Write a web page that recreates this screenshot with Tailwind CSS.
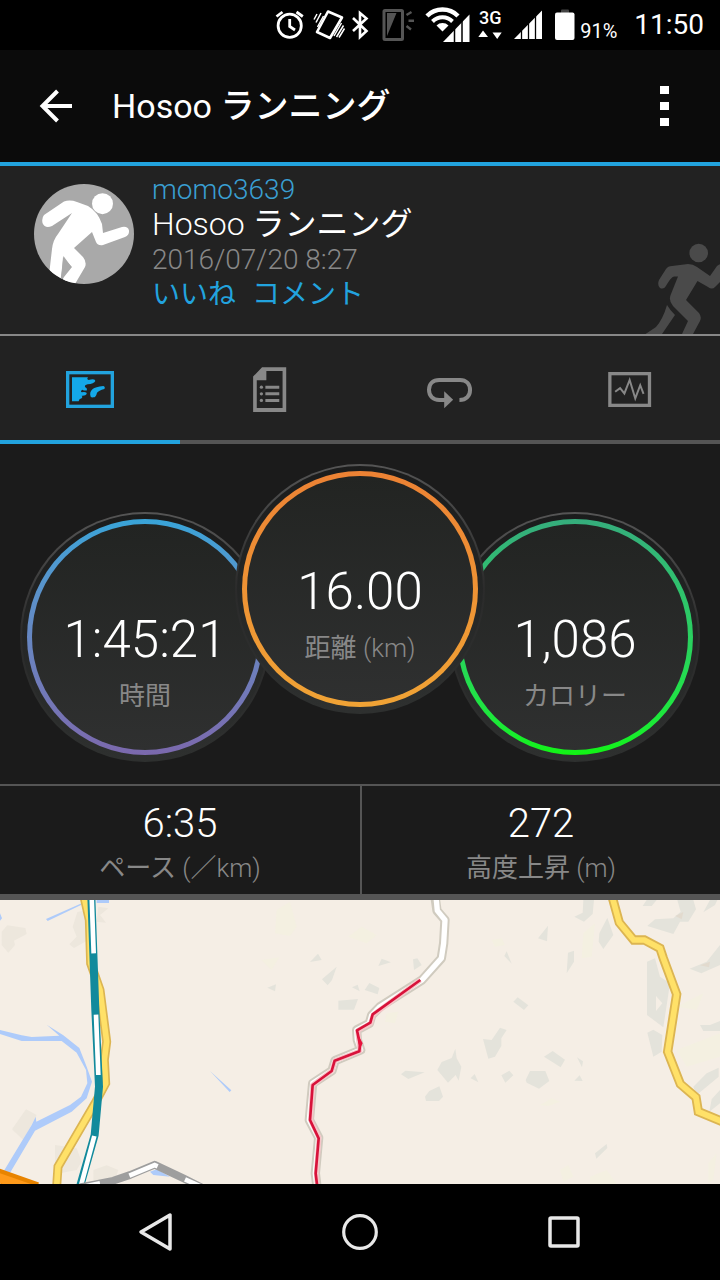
<!DOCTYPE html>
<html lang="ja">

<head>
    <meta charset="UTF-8">
    <meta name="viewport" content="width=device-width, initial-scale=1.0">
    <script src="https://cdn.jsdelivr.net/npm/@tailwindcss/browser@4"></script>
    <title>Hosoo ランニング</title>
</head>

<body class="flex min-h-screen flex-col bg-[#1b1b1b] font-['Roboto','Noto_Sans_CJK_JP',sans-serif] text-white">

    <!-- status bar -->
    <div class="flex h-[50px] items-center justify-end bg-black pr-4">
        <svg class="h-[50px] w-9" viewBox="270 0 36 50" fill="none" stroke="#fff" stroke-width="2.8">
            <circle cx="287.7" cy="25.7" r="11.6" />
            <path d="M274.5 16.5L280.5 12M294.5 12L300.8 16.5M287.7 19V26.5L293 30" />
        </svg>
        <svg class="h-[50px] w-10" viewBox="306 0 40 50" fill="none" stroke="#fff" stroke-width="2">
            <path d="M326 11.5L340 17.5L328 38L315 32Z" stroke-width="2.6" stroke-linejoin="round" />
            <path d="M312 19.5L315 14M314 22.5L319 13M315.5 27L321.5 16M334.5 37L341.5 25.5M337 37.5L342.5 28.5M332 36L339.5 23" stroke-width="1.5" />
        </svg>
        <svg class="h-[50px] w-7" viewBox="346 0 28 50" fill="none" stroke="#fff" stroke-width="2.6">
            <path d="M351 18L364.5 31L358 37V13L364.5 18.5L351 31" />
        </svg>
        <svg class="h-[50px] w-11" viewBox="374 0 44 50" fill="none" stroke="#555" stroke-width="3">
            <rect x="382" y="10.5" width="18.5" height="29" rx="1" />
            <path d="M385 13H394.5L385 36Z" fill="#555" stroke="none" />
            <path d="M404.5 15L409.5 12M406.5 20.7H412M404.5 26L409 29.5" stroke-width="2.4" />
        </svg>
        <svg class="h-[50px] w-[54px]" viewBox="418 0 54 50" fill="none" stroke="#fff">
            <path d="M425 16A22 22 0 0 1 456 16" stroke-width="4.5" />
            <path d="M430.5 21.5A14 14 0 0 1 450.5 21.5" stroke-width="4" />
            <path d="M434.5 25.5A8.5 8.5 0 0 1 446.5 25.5L440.5 31.5Z" fill="#fff" stroke="none" />
            <path d="M441 42L467.5 14.5V42Z" fill="#fff" stroke="#000" stroke-width="3" paint-order="stroke" />
            <path d="M452.5 20V43M460 15V43" stroke="#000" stroke-width="1.5" />
        </svg>
        <div class="flex h-[50px] w-8 flex-col items-center pt-2">
            <span class="text-lg leading-5 font-medium">3G</span>
            <svg class="h-3 w-8" viewBox="472 28 32 12" fill="#fff">
                <path d="M476.3 37L481 30.5L486 37ZM490.5 32.5H499.7L495.2 39Z" />
            </svg>
        </div>
        <svg class="h-[50px] w-10" viewBox="504 0 40 50">
            <path d="M512 39L540 10.5V39Z" fill="#fff" />
            <path d="M519.5 20V40M526.5 15V40M533.5 10V40" stroke="#000" stroke-width="1.3" />
        </svg>
        <svg class="h-[50px] w-[34px]" viewBox="544 0 34 50">
            <rect x="559" y="9.5" width="8" height="5" rx="1" fill="#444" />
            <rect x="553" y="12.5" width="19.5" height="27.5" rx="2" fill="#fff" />
        </svg>
        <span class="w-[54px] pt-3 text-xl leading-6">91%</span>
        <span class="text-[28px] leading-[50px]">11:50</span>
    </div>

    <!-- title bar -->
    <header class="flex h-[116px] items-center border-b-4 border-[#22a3de] bg-[#0b0b0b]">
        <button type="button" aria-label="戻る" class="px-8">
            <svg class="size-12" viewBox="32 82 48 48" fill="none" stroke="#fff" stroke-width="4">
                <path d="M72 106H42M57.5 91L42.5 106L57.5 121" />
            </svg>
        </button>
        <h1 class="flex-1 text-[34px] leading-10">Hosoo <span class="font-medium">ランニング</span></h1>
        <button type="button" aria-label="メニュー" class="mr-8 flex h-12 w-12 flex-col items-center justify-center gap-2">
            <span class="h-2 w-[9px] bg-white"></span>
            <span class="h-2 w-[9px] bg-white"></span>
            <span class="h-2 w-[9px] bg-white"></span>
        </button>
    </header>

    <!-- activity owner -->
    <section class="relative flex gap-[18px] border-b-2 border-[#888] bg-[#222] px-[34px] pt-1.5 pb-[22px]">
        <svg class="mt-3 size-[100px] rounded-full bg-[#a9a9a9]" viewBox="34 184 100 100" fill="#fff">
            <circle cx="102.5" cy="203.7" r="10.5" />
            <path d="M44 215L64 201.500Q70 199.500 77 202L88 206Q98 212 102 224L103 233L122 227Q128 226 129 230.500Q129.500 235 125 237L103 245Q98 246 96 242L92 232L74 248L83 257Q87 262 85 267L75 284H60L64 277L72 267L63 257L61 284H48L52 249Q53 240 58 234L72 213L52 226Q45 229 42.500 223Q41.500 218 44 215Z" />
            <path d="M63.5 256L71 266.5L63 277L60.5 280Z" fill="#a9a9a9" />
        </svg>
        <div class="text-[28px] leading-[35px]">
            <a href="#" class="block font-light text-[#3a9fd2]">momo3639</a>
            <p class="text-[32px] leading-[35px] font-light">Hosoo <span class="font-normal">ランニング</span></p>
            <p class="font-light text-[#888]">2016/07/20 8:27</p>
            <div class="flex gap-4 text-[#22a3de]">
                <a href="#">いいね</a>
                <a href="#">コメント</a>
            </div>
        </div>
        <svg class="absolute right-0 bottom-0 h-[94px] w-20" viewBox="640 240 80 94" fill="#4a4a4a">
            <circle cx="698.7" cy="253" r="9.3" />
            <path d="M659 280L666 269Q668 266 672 266L688 264Q693 264 697 267L710 276L717 266Q719 264 722 264V280L715 287Q712 290 708 287L697.5 281L686 300L699 313Q702 317 700 321L693 334H682L688 321L673 306Q668 300 671 294L678 276.5H674Q671 277 666.5 285Q664 290 660 288Q657 285 659 280Z" />
            <path d="M667 305Q670 310 675 315L662 334H645.5L656 327Q663 319 667 305Z" />
        </svg>
    </section>

    <nav class="grid grid-cols-4 bg-[#222]">
        <a href="#" aria-label="地図" class="flex h-[108px] items-center justify-center border-b-4 border-[#22a3de] pt-0.5">
            <svg class="h-[37px] w-12" viewBox="198 107 144 111" fill="#14a8e8">
                <rect x="203" y="112" width="134" height="101" fill="none" stroke="#22a3de" stroke-width="10" />
                <path d="M216 126H264Q259 132 266 134Q286 129 286 137Q282 146 263 147Q253 149 255 155Q262 158 261 165Q254 167 247 163Q240 167 245 171Q261 168 260 176Q257 182 245 181Q251 187 239 191L236 198H216Z" />
                <path d="M272 184Q267 171 278 161Q286 155 310 152Q317 155 313 161Q296 166 291 172Q288 186 280 186Q274 187 272 184Z" />
            </svg>
        </a>
        <a href="#" aria-label="詳細" class="flex h-[108px] items-center justify-center border-b-4 border-[#555] pt-0.5">
            <svg class="h-[45px] w-[34px]" viewBox="758 95 102 136" fill="#888">
                <path fill-rule="evenodd" d="M785 96H858V231H758V124ZM798 107V135H769V219H847V107Z" />
                <path d="M795 156H837M795 176H837M795 196H837" stroke="#888" stroke-width="9" />
                <circle cx="783" cy="156" r="5" />
                <circle cx="783" cy="176" r="5" />
                <circle cx="783" cy="196" r="5" />
            </svg>
        </a>
        <a href="#" aria-label="ラップ" class="flex h-[108px] items-center justify-center border-b-4 border-[#555] pt-0.5">
            <svg class="h-[39px] w-12" viewBox="197 105 145 116" fill="none" stroke="#888" stroke-width="12">
                <path d="M298 195C319 195 330 181 330 165C330 146 318 134 300 134H237C218 134 206 146 206 164C206 182 218 195 237 195H255" />
                <path d="M252 168L279 194L252 220Z" fill="#888" stroke="none" />
            </svg>
        </a>
        <a href="#" aria-label="グラフ" class="flex h-[108px] items-center justify-center border-b-4 border-[#555] pt-0.5">
            <svg class="h-[35px] w-11" viewBox="743 110 132 106" fill="none" stroke="#888">
                <rect x="748" y="115" width="120" height="96" stroke-width="10" />
                <path d="M764 170L779 159L792 175L808 134L825 190L840 150L850 176" stroke-width="6" />
            </svg>
        </a>
    </nav>

    <!-- gauges -->
    <section class="flex justify-center pt-5 pb-[22px] text-center font-light">
        <div class="mt-12 -mr-[35px] size-[250px] shrink-0 rounded-full bg-linear-to-b from-[#555] via-[#2b2b2b] to-[#2e302f] p-0.5">
            <div class="size-full rounded-full bg-linear-to-b from-[#1b1c1c] to-[#2e302f] p-[5px]">
                <div class="size-full rounded-full bg-linear-to-b from-[#38a4d8] to-[#7b69ad] p-[5px]">
                    <div class="size-full rounded-full bg-linear-to-b from-[#222422] to-[#2f3030] pt-[88px]">
                        <p class="text-[51px] leading-[56px]">1:45:21</p>
                        <p class="mt-3 text-[26px] leading-8 font-normal text-[#888]">時間</p>
                    </div>
                </div>
            </div>
        </div>
        <div class="z-10 size-[250px] shrink-0 rounded-full bg-linear-to-b from-[#555] via-[#2b2b2b] to-[#2e302f] p-0.5">
            <div class="size-full rounded-full bg-linear-to-b from-[#1b1c1c] to-[#2e302f] p-[5px]">
                <div class="size-full rounded-full bg-linear-to-b from-[#ec8234] to-[#f0a335] p-[5px]">
                    <div class="size-full rounded-full bg-linear-to-b from-[#222422] to-[#2f3030] pt-[88px]">
                        <p class="text-[51px] leading-[56px]">16.00</p>
                        <p class="mt-3 text-[26px] leading-8 text-[#888]"><span class="font-normal">距離</span> (km)</p>
                    </div>
                </div>
            </div>
        </div>
        <div class="mt-12 -ml-[35px] size-[250px] shrink-0 rounded-full bg-linear-to-b from-[#555] via-[#2b2b2b] to-[#2e302f] p-0.5">
            <div class="size-full rounded-full bg-linear-to-b from-[#1b1c1c] to-[#2e302f] p-[5px]">
                <div class="size-full rounded-full bg-linear-to-b from-[#35ad7c] to-[#12f312] p-[5px]">
                    <div class="size-full rounded-full bg-linear-to-b from-[#222422] to-[#2f3030] pt-[88px]">
                        <p class="text-[51px] leading-[56px]">1,086</p>
                        <p class="mt-3 text-[26px] leading-8 font-normal text-[#888]">カロリー</p>
                    </div>
                </div>
            </div>
        </div>
    </section>

    <section class="grid grid-cols-2 border-t-2 border-b-6 border-[#555] text-center font-light">
        <div class="pt-[18px] pb-2.5">
            <p class="text-[40px] leading-10">6:35</p>
            <p class="mt-2 text-[26px] leading-8 text-[#888]"><span class="font-normal">ペース</span> (／km)</p>
        </div>
        <div class="border-l-2 border-[#555] pt-[18px] pb-2.5">
            <p class="text-[40px] leading-10">272</p>
            <p class="mt-2 text-[26px] leading-8 text-[#888]"><span class="font-normal">高度上昇</span> (m)</p>
        </div>
    </section>

    <!-- route map -->
    <svg class="min-h-[284px] w-full flex-1 bg-[#f5eee5]" viewBox="0 30 2160 852" preserveAspectRatio="xMidYMid slice" fill="none">
        <!-- west: river, railway, roads -->
        <g fill="#ede7dd">
            <path d="M5 125L22 106L76 114L80 132L42 152L45 165L25 188L5 165ZM232 66L262 60L265 150L222 174L208 163L230 140L218 110ZM295 50L325 55L300 75L318 98L290 95Z" />
            <path d="M78 658L110 675L70 750L36 718ZM165 765L230 775L245 815L230 840L180 850L165 830ZM280 840L320 826L355 840L345 870H280Z" />
        </g>
        <g fill="#aecbfa">
            <path d="M138 87L245 40L243 45L143 93ZM290 30H327V39H290ZM0 70L6 85L0 92ZM0 420L65 436L95 441L178 437L140 404L190 436L238 474L260 530L276 575L260 625L215 665L105 722L28 852H6L95 705L107 680L109 695L210 645L243 620L262 580L258 540L230 488L185 453H65L0 432Z" />
            <path d="M630 543L694 601L689 606ZM450 845L470 838L510 860L460 855Z" />
        </g>
        <path d="M252 20L268 90L272 220L300 300L320 455L313 510L317 580L285 640L174 830L170 890" stroke="#dcb552" stroke-width="27" />
        <path d="M252 20L268 90L272 220L300 300L320 455L313 510L317 580L285 640L174 830L170 890" stroke="#ffe168" stroke-width="17" />
        <path d="M274 20L286 360L297 590L284 735L240 890" stroke="#128a9c" stroke-width="24" stroke-linejoin="round" />
        <path d="M275 20L281 190M288 374L295 555M283 738L242 890" stroke="#fff" stroke-width="14" />
        <path d="M240 892L340 872L390 855L464 824L550 865L620 900" stroke="#9e9e9e" stroke-width="23" stroke-linejoin="round" />
        <path d="M260 888L300 880M388 857L464 825L473 829M555 868L610 893" stroke="#fff" stroke-width="14" />
        <path d="M-10 855L110 897" stroke="#e88400" stroke-width="42" />
        <path d="M-10 861L110 903" stroke="#ff9a1a" stroke-width="28" />

        <!-- centre: recorded route -->
        <g transform="translate(720 0)">
            <path d="M110 60L150 35L170 110L150 138L105 130ZM325 140L365 110L410 135L380 160ZM65 210L118 202L95 240ZM440 370L475 365L465 400L435 395Z" fill="#f4f0e1" />
            <path d="M210 216L234 191L245 210ZM246 268L290 230L276 270L263 286ZM82 293L108 283L105 304ZM415 228L425 206L453 217ZM519 208L532 205L545 225L522 240ZM336 292L353 284L359 304ZM374 300L388 279L418 294L413 313ZM295 332L354 327L342 359H295ZM483 553L496 542L554 547L505 567ZM592 540L605 516L635 504L646 476L650 505L664 530L656 572L647 555L624 578ZM692 565L704 552L715 577ZM555 620L568 603L598 589L609 620L597 633H558Z" fill="#e4e3db" />
            <path d="M585 20L591 62L615 90L611 160L604 205L546 270L420 350L395 376L388 400L350 420L352 450L362 480L285 512L276 542L218 580L208 690L236 743L226 850L232 900" stroke="#d0cbbf" stroke-width="28" stroke-linejoin="round" />
            <path d="M588 20L592 62L615 90L611 160L604 205L546 270L420 350L395 376L388 400L350 420L352 450L362 480L285 512L276 542L218 580L208 690L236 743L226 850L232 900" stroke="#fff" stroke-width="16" stroke-linejoin="round" />
            <path d="M541 270L400 374L392 400L353 422L356 450L360 483L285 512L276 542L218 585L212 690L237 743L229 850L233 900" stroke="#f7c5c8" stroke-width="15" stroke-linejoin="round" />
            <path d="M541 270L398 373L391 398L351 421L360 465L358 484L284 512L275 543L218 585L210 690L236 745L227 850L233 900" stroke="#d8123a" stroke-width="8" stroke-linejoin="round" />
            <path d="M352 430L368 460L358 480Z" fill="#e8123c" />
        </g>

        <!-- east: woodland and road -->
        <g transform="translate(1440 0)">
            <path d="M310 130L345 100L335 200L305 205ZM35 150L65 145L75 165L45 170ZM590 350L670 310L650 360ZM590 480L720 430V500L620 530ZM240 840L265 825L280 860L250 875ZM330 860L380 840L410 882H330ZM685 820L710 790L700 870L685 880ZM180 645L215 625L240 635L205 648Z" fill="#f4f0e1" />
            <path d="M310 30H342L338 72L312 95L283 80L308 68ZM358 130L382 83L400 135L370 177L356 155ZM174 145L204 107L201 154ZM73 198L80 184L95 221ZM264 188L282 182V215L260 250ZM100 335L113 322L145 346L132 360ZM9 447L35 450L60 413L80 420L64 445V468L45 500L25 506ZM64 556L88 542L100 556L76 578ZM192 500L218 483L255 509L242 532ZM137 570L150 543H196L208 573L177 596L140 578ZM291 502L309 514L306 532ZM283 572L299 556L308 573ZM345 790L380 762L382 774L349 806Z" fill="#e4e3db" />
            <path d="M500 30H530L515 48H488ZM592 30H640L648 58L625 95H600L580 132L502 108L525 88L580 85L602 65ZM690 30H712L705 45L670 67ZM720 165V225L664 250L629 236L680 215ZM501 215L525 205L540 260L570 280L550 412L501 375ZM502 428L520 419L547 435L545 485L520 500ZM660 405H690L720 393V423H670ZM640 590L680 550L716 533V560L650 615ZM695 628L720 600V640L688 665Z" fill="#e4e3db" />
            <path d="M528 318L547 340L528 363Z" fill="#f5eee5" />
            <path d="M586 78L610 66L605 88ZM660 226L690 215L687 232Z" fill="#e2dace" />
            <path d="M395 15L418 98L461 150H493L540 175L550 205L590 313L563 485L601 582L648 622L655 665L740 700" stroke="#dcb552" stroke-width="28" />
            <path d="M395 15L418 98L461 150H493L540 175L550 205L590 313L563 485L601 582L648 622L655 665L740 700" stroke="#ffe168" stroke-width="17" />
        </g>
    </svg>

    <!-- system buttons -->
    <footer class="bg-black">
        <div class="mx-auto grid h-24 w-[85%] grid-cols-3 place-items-center">
            <button type="button" aria-label="戻る">
                <svg class="size-12" viewBox="0 0 48 48" fill="none" stroke="#e8e8e8" stroke-width="3.5" stroke-linejoin="round">
                    <path d="M9 24L38 7V41Z" />
                </svg>
            </button>
            <button type="button" aria-label="ホーム">
                <svg class="size-12" viewBox="0 0 48 48" fill="none" stroke="#e8e8e8" stroke-width="3.2">
                    <circle cx="24" cy="24" r="16.3" />
                </svg>
            </button>
            <button type="button" aria-label="履歴">
                <svg class="size-12" viewBox="0 0 48 48" fill="none" stroke="#e8e8e8" stroke-width="3.5">
                    <rect x="10" y="10" width="28" height="28" rx="1" />
                </svg>
            </button>
        </div>
    </footer>
</body>

</html>
